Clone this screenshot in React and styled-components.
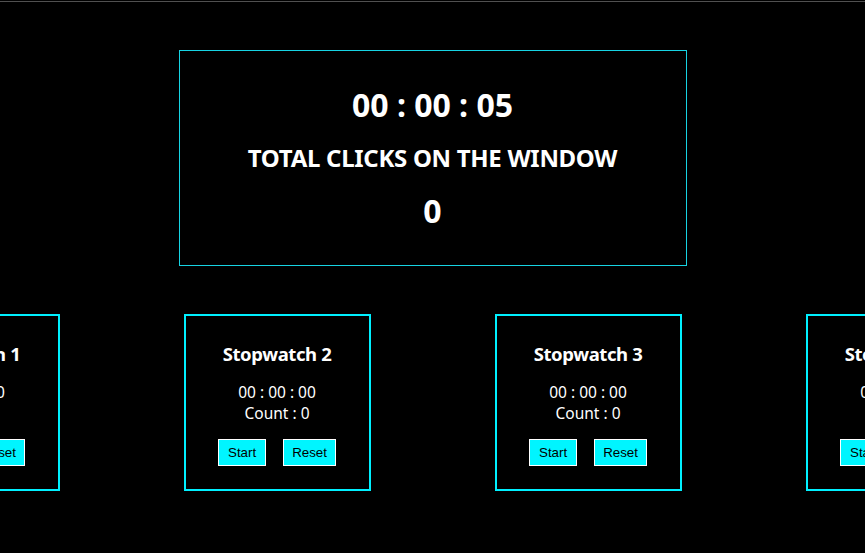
import React from 'react';
import styled, { createGlobalStyle } from 'styled-components';

const GlobalStyle = createGlobalStyle`
  html, body {
    margin: 0;
    padding: 0;
    background: #000;
  }
  body {
    font-family: 'Noto Sans', 'Open Sans', sans-serif;
    color: #fff;
    overflow: hidden;
  }
`;

const Page = styled.div`
  width: 865px;
  height: 553px;
  background: #000;
  overflow: hidden;
`;

const TopRule = styled.div`
  height: 1px;
  margin-top: 1px;
  background: #505050;
`;

const TotalBox = styled.section`
  box-sizing: border-box;
  width: 508px;
  height: 216px;
  margin: 48px auto 0;
  padding-top: 38px;
  border: 1px solid #17d3e3;
  display: flex;
  flex-direction: column;
  align-items: center;
  gap: 25px;
`;

const BigNumber = styled.h1`
  margin: 0;
  font-size: 32px;
  line-height: 32px;
  font-weight: 700;
`;

const Heading = styled.h2`
  margin: 0;
  font-size: 24px;
  line-height: 24px;
  font-weight: 700;
  letter-spacing: -0.3px;
`;

const CardRow = styled.div`
  margin-top: 48px;
  display: flex;
  justify-content: center;
  gap: 124px;
`;

const Card = styled.div`
  box-sizing: border-box;
  flex: 0 0 187px;
  height: 177px;
  border: 2px solid #00f0ff;
  padding-top: 28px;
  display: flex;
  flex-direction: column;
  align-items: center;
`;

const CardTitle = styled.h3`
  margin: 0 0 21px;
  font-size: 18.5px;
  line-height: 19px;
  font-weight: 700;
  letter-spacing: -0.4px;
`;

const Line = styled.p`
  margin: 0 0 ${(p) => p.$after || 0}px;
  font-size: 15.5px;
  line-height: 16px;
`;

const Buttons = styled.div`
  margin-top: 18px;
  display: flex;
  gap: 17px;
`;

const Button = styled.button`
  box-sizing: border-box;
  height: 27px;
  padding: 0 ${(p) => p.$pad}px;
  border: 1px solid #fff;
  border-radius: 0;
  background: #00f5ff;
  color: #000;
  font-family: 'Liberation Sans', Arial, sans-serif;
  font-size: 13.33px;
  line-height: 25px;
`;

const watches = [1, 2, 3, 4];

const App = () => (
  <Page>
    <GlobalStyle />
    <TopRule />
    <TotalBox>
      <BigNumber>00 : 00 : 05</BigNumber>
      <Heading>TOTAL CLICKS ON THE WINDOW</Heading>
      <BigNumber>0</BigNumber>
    </TotalBox>
    <CardRow>
      {watches.map((n) => (
        <Card key={n}>
          <CardTitle>Stopwatch {n}</CardTitle>
          <Line $after={5}>00 : 00 : 00</Line>
          <Line>Count : 0</Line>
          <Buttons>
            <Button $pad={9}>Start</Button>
            <Button $pad={8}>Reset</Button>
          </Buttons>
        </Card>
      ))}
    </CardRow>
  </Page>
);

export default App;
